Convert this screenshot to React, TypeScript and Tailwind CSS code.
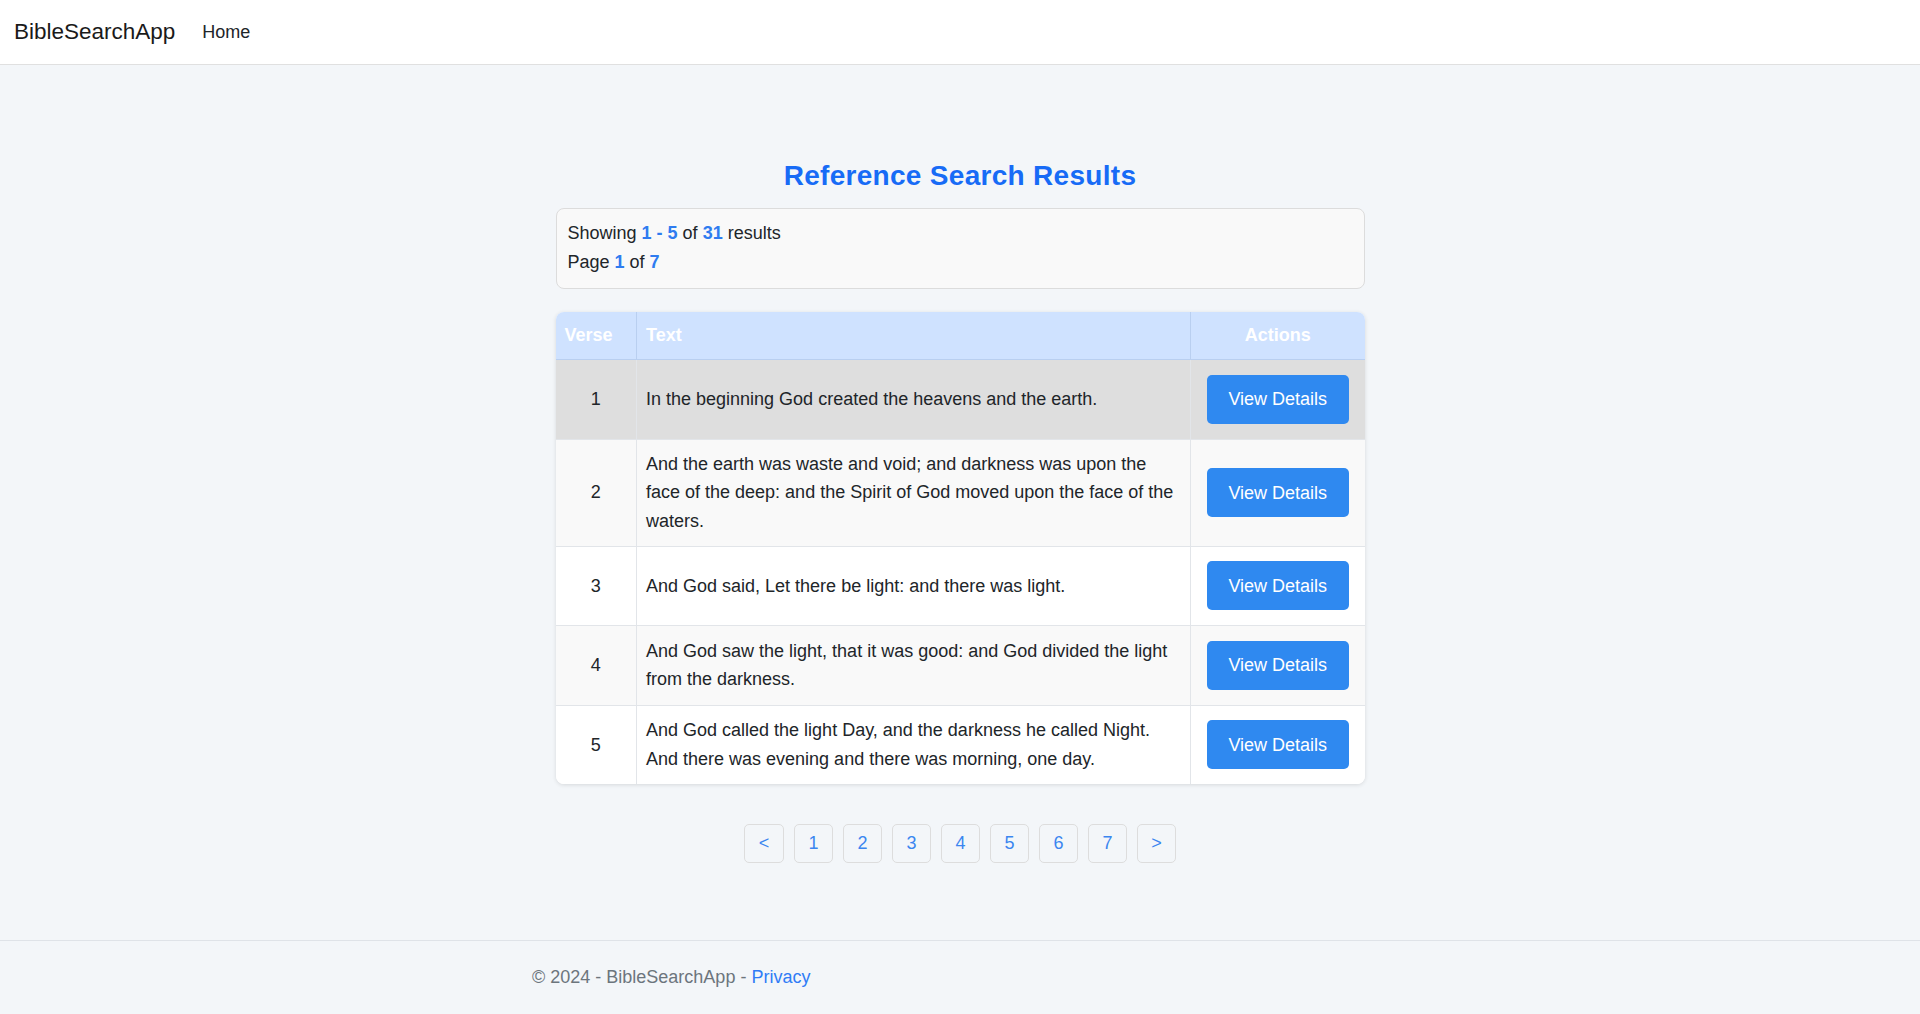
import React from 'react';

interface Verse {
  number: number;
  text: string;
}

const verses: Verse[] = [
  { number: 1, text: 'In the beginning God created the heavens and the earth.' },
  {
    number: 2,
    text: 'And the earth was waste and void; and darkness was upon the face of the deep: and the Spirit of God moved upon the face of the waters.',
  },
  { number: 3, text: 'And God said, Let there be light: and there was light.' },
  { number: 4, text: 'And God saw the light, that it was good: and God divided the light from the darkness.' },
  {
    number: 5,
    text: 'And God called the light Day, and the darkness he called Night. And there was evening and there was morning, one day.',
  },
];

const rowBg = ['bg-[#dedede]', 'bg-[#f9f9f9]', 'bg-white', 'bg-[#f9f9f9]', 'bg-white'];

const pages = ['<', '1', '2', '3', '4', '5', '6', '7', '>'];

const App: React.FC = () => {
  return (
    <div
      className="min-h-screen flex flex-col bg-[#f3f6f9] text-[#212529] text-[18px]"
      style={{ fontFamily: '"Liberation Sans", Arial, sans-serif' }}
    >
      <header className="h-[65px] bg-white border-b border-[#e0e0e0] flex items-center px-[14px]">
        <span className="text-[22.5px] text-[#1a1a1a] mr-[27px]">BibleSearchApp</span>
        <span className="text-[18px] text-[#212529]">Home</span>
      </header>

      <main className="flex-1 flex flex-col items-center pt-[94px]">
        <div className="w-[809px]">
          <h2 className="text-center text-[28px] leading-[34px] font-bold tracking-[0.3px] text-[#176bf6] mb-[15px]">
            Reference Search Results
          </h2>

          <div className="bg-[#f9f9f9] border border-[#dcdcdc] rounded-[8px] pt-[10px] pb-[11px] px-[11px] leading-[29px]">
            <div>
              Showing <span className="font-bold text-[#2f7cf0]">1 - 5</span> of{' '}
              <span className="font-bold text-[#2f7cf0]">31</span> results
            </div>
            <div>
              Page <span className="font-bold text-[#2f7cf0]">1</span> of{' '}
              <span className="font-bold text-[#2f7cf0]">7</span>
            </div>
          </div>

          <div className="mt-[23px] rounded-[8px] overflow-hidden shadow-[0_1px_4px_rgba(0,0,0,0.12)] bg-white">
            <table className="w-full border-collapse table-fixed">
              <thead>
                <tr className="bg-[#cfe2ff] text-white font-bold">
                  <th className="w-[81px] text-left px-[9px] py-[10px] leading-[27px] border-b border-r border-[#b9cff0]">
                    Verse
                  </th>
                  <th className="text-left px-[9px] py-[10px] leading-[27px] border-b border-r border-[#b9cff0]">Text</th>
                  <th className="w-[174px] text-center px-[9px] py-[10px] leading-[27px] border-b border-[#b9cff0]">
                    Actions
                  </th>
                </tr>
              </thead>
              <tbody>
                {verses.map((v, i) => (
                  <tr key={v.number} className={rowBg[i]}>
                    <td className={`text-center px-[9px] py-[10px] leading-[28.7px] border-r border-[#e2e5e9] ${i < verses.length - 1 ? 'border-b' : ''}`}>
                      {v.number}
                    </td>
                    <td className={`px-[9px] py-[10px] leading-[28.7px] border-r border-[#e2e5e9] ${i < verses.length - 1 ? 'border-b' : ''}`}>
                      {v.text}
                    </td>
                    <td className={`text-center px-[9px] py-[10px] leading-none border-[#e2e5e9] ${i < verses.length - 1 ? 'border-b' : ''}`}>
                      <button className="my-[4.75px] w-[142px] h-[49px] rounded-[5px] bg-[#2f89f0] text-white text-[18px] align-middle">
                        View Details
                      </button>
                    </td>
                  </tr>
                ))}
              </tbody>
            </table>
          </div>
        </div>

        <div className="flex gap-[10px] mt-[40px]">
          {pages.map((p, i) => (
            <button
              key={i}
              className={`${i === 0 ? 'w-[40px]' : 'w-[39px]'} h-[39px] rounded-[5px] border border-[#dddddd] text-[#3b86f0] text-[18px] flex items-center justify-center`}
            >
              {p}
            </button>
          ))}
        </div>
      </main>

      <footer className="h-[74px] border-t border-[#dfe3e8] flex items-center">
        <div className="w-[880px] mx-auto px-[12px] text-[#6c757d]">
          © 2024 - BibleSearchApp - <a className="text-[#2f7cf6]">Privacy</a>
        </div>
      </footer>
    </div>
  );
};

export default App;
